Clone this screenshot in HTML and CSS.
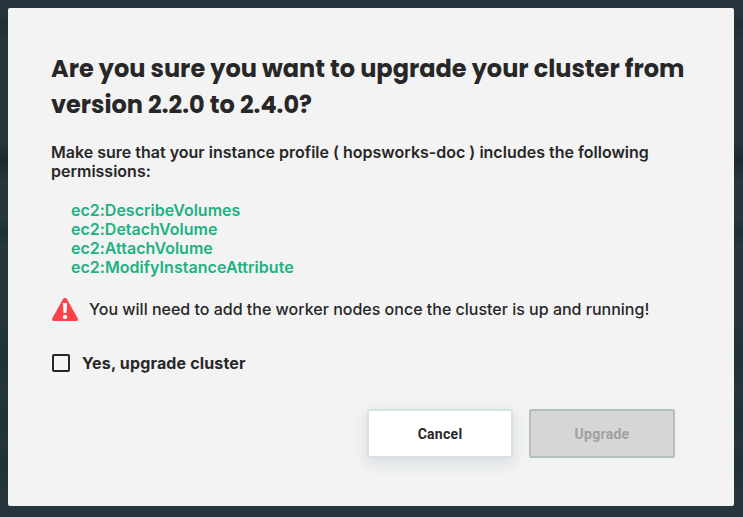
FILE: index.html
```html
<!DOCTYPE html>
<html lang="en">
<head>
<meta charset="utf-8">
<title>Upgrade cluster</title>
<link rel="stylesheet" href="styles.css">
</head>
<body>
<main class="dialog">
<h1 class="title"><span class="line">Are you sure you want to upgrade your cluster from</span> <span class="line">version 2.2.0 to 2.4.0?</span></h1>
<p class="intro">Make sure that your instance profile ( hopsworks-doc ) includes the following permissions:</p>
<ul class="permissions"><li>ec2:DescribeVolumes</li><li>ec2:DetachVolume</li><li>ec2:AttachVolume</li><li class="long">ec2:ModifyInstanceAttribute</li></ul>
<div class="warning">
<svg width="28" height="25" viewBox="0 0 28 25"><path d="M12.2 1.8Q14-.2 15.8 1.8L26.7 21.2Q27.7 24 24.8 24H3.2Q.3 24 1.3 21.2Z" fill="#fc4349"/><path d="M11.9 6h4.2l-.7 10h-2.8z" fill="#fff"/><circle cx="14" cy="19.9" r="2.2" fill="#fff"/></svg>
<span class="notice">You will need to add the worker nodes once the cluster is up and running!</span>
</div>
<label class="confirm"><input type="checkbox" class="box"><span>Yes, upgrade cluster</span></label>
<div class="actions"><button class="button cancel">Cancel</button><button class="button upgrade" disabled>Upgrade</button></div>
</main>
</body>
</html>
```
FILE: styles.css
```css
* { box-sizing: border-box; }
html { background: #27353e; }
body { margin: 0; padding: 8px 9px 11px 8px; height: 517px; background: linear-gradient(#27353e 2%, #202f37 5%, #27353e 8%, #27353e 27%, #1d2a33 31%, #27353e 35%, #27353e 42%, #1e3137 45%, #27353e 48%, #27353e 62%, #1e3137 69%, #27353e 75%, #1e3137 82%, #27353e 86%, #1e3137 90%, #27353e 95%); font-family: Inter, sans-serif; font-feature-settings: "calt" 0; color: #272727; overflow: hidden; }
.dialog { height: 498px; padding: 43px 59px 0 43px; background: #f3f3f3; border-radius: 2px; }
.title { margin: 0; font: 700 24px/36px Poppins, Inter, sans-serif; }
.line { display: block; width: max-content; white-space: nowrap; }
.intro { margin: 20px 0 0; font-size: 16px; line-height: 19px; font-weight: 600; letter-spacing: .005px; }
.permissions { list-style: none; margin: 20px 0 0; padding: 0 0 0 20px; color: #21b182; font-size: 16px; line-height: 19px; font-weight: 600; }
.long { letter-spacing: .04px; }
.warning { display: flex; align-items: center; gap: 10px; margin-top: 20px; height: 25px; font-size: 16px; font-weight: 500; white-space: nowrap; }
.notice { padding-bottom: 2px; }
.confirm { display: flex; align-items: center; gap: 12px; margin: 32px 0 0 1px; height: 18px; font-size: 16px; font-weight: 700; letter-spacing: .15px; }
.box { appearance: none; width: 18px; height: 18px; margin: 0; border: 2px solid #272727; border-radius: 2px; }
.actions { display: flex; justify-content: flex-end; gap: 16px; margin-top: 37px; }
.button { width: 146px; height: 49px; padding: 0; border: 2px solid #d6e1e0; border-radius: 2px; font: 700 14px/20px Roboto, sans-serif; letter-spacing: .28px; }
.cancel { background: #fff; color: #272727; box-shadow: 0 5px 15px rgba(144, 164, 174, .3); }
.upgrade { background: #d6d6d6; border-color: #b2bfbe; color: #a0a0a0; }
```
